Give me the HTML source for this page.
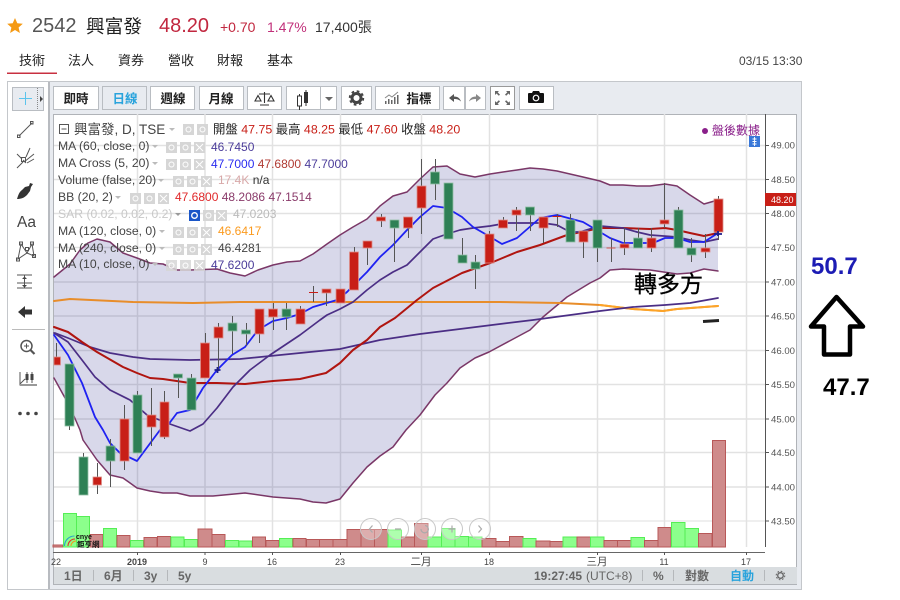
<!DOCTYPE html>
<html><head><meta charset="utf-8"><style>
html,body{margin:0;padding:0;background:#fff;width:900px;height:600px;overflow:hidden}
svg{display:block}
text{font-family:"Liberation Sans","Noto Sans CJK TC",sans-serif}
.b{fill:#fff;stroke:#b9bdc2;stroke-width:1}
.bt{font-size:12.5px;font-weight:700;fill:#222;text-anchor:middle}
.g line{stroke:#e2e2e2;stroke-width:1.5}
.l{font-size:12.2px;fill:#444}
.w{stroke:#555;stroke-width:1}
.r{fill:#c81f17;stroke:#dc8f8a;stroke-width:.8}
.n{fill:#2e8055;stroke:#92bfa6;stroke-width:.8}
.vr{fill:#cf8b8b;stroke:#b85858;stroke-width:1}
.vg{fill:#8cff8c;stroke:#55ee55;stroke-width:1}
.y{font-size:9.6px;fill:#555}
.x{font-size:9px;fill:#444;text-anchor:middle}
.ib{fill:#d6d6d6}
.bb{font-size:12px;font-weight:700;fill:#666}
.ic{fill:none;stroke:#555;stroke-width:1}
.m{fill:none;stroke-linejoin:round;stroke-linecap:round}
</style></head><body>
<svg width="900" height="600" viewBox="0 0 900 600" xmlns="http://www.w3.org/2000/svg">
<polygon points="15,18 17.3,23.3 22.8,23.8 18.6,27.5 19.9,33 15,30 10.1,33 11.4,27.5 7.2,23.8 12.7,23.3" fill="#f59a14"/>
<text x="32" y="32" font-size="20" fill="#555">2542</text>
<text x="86" y="33" font-size="18.7" fill="#222">興富發</text>
<text x="159" y="32" font-size="20" fill="#c1273f">48.20</text>
<text x="220" y="32" font-size="14" fill="#c1273f">+0.70</text>
<text x="267" y="32" font-size="14" fill="#c1307a">1.47%</text>
<text x="315" y="32" font-size="14" fill="#333">17,400張</text>
<g font-size="13" fill="#222"><text x="19" y="65">技術</text><text x="68" y="65">法人</text><text x="118" y="65">資券</text><text x="168" y="65">營收</text><text x="217" y="65">財報</text><text x="267" y="65">基本</text></g>
<rect x="7" y="72.500" width="50" height="1.500" fill="#c83040"/>
<text x="739" y="65" font-size="12" fill="#444">03/15 13:30</text>

<!-- frame -->
<rect x="7.500" y="81.500" width="794" height="508" fill="#fff" stroke="#c4c7cb"/>
<rect x="48" y="82" width="753" height="31" fill="#e8ebf0"/>
<rect x="48" y="82" width="2" height="507" fill="#b8bbc0"/>
<rect x="50" y="113" width="751" height="476" fill="#e8ebf0"/>
<rect x="50" y="585" width="751" height="4" fill="#e8ebf0"/>
<rect x="53" y="114" width="744" height="471" fill="#fff"/>
<rect x="53.500" y="114.500" width="743" height="470" fill="none" stroke="#b0b3b8"/>

<!-- toolbar -->
<rect class="b" x="53.500" y="86.500" width="45" height="23"/><text class="bt" x="76" y="103">即時</text>
<rect x="102.500" y="86.500" width="44" height="23" fill="#e8ebf0" stroke="#b9bdc2"/><text class="bt" x="125" y="103" style="fill:#29a3dc">日線</text>
<rect class="b" x="150.500" y="86.500" width="44" height="23"/><text class="bt" x="173" y="103">週線</text>
<rect class="b" x="199.500" y="86.500" width="44" height="23"/><text class="bt" x="221" y="103">月線</text>
<rect class="b" x="247.500" y="86.500" width="34" height="23"/>
<g fill="none" stroke="#333" stroke-width="1.100"><path d="M264.500 92v11M259 94h11M258 95.500l-3 5.500h6zM271 95.500l-3 5.500h6zM260 105h9"/></g>
<rect class="b" x="286.500" y="86.500" width="50" height="23"/><line x1="320.500" y1="87" x2="320.500" y2="109" stroke="#b9bdc2"/>
<path d="M299.500 94v16M306 90v16" stroke="#333" stroke-width="1"/><rect x="297.500" y="96" width="4" height="10" fill="#fff" stroke="#333"/><rect x="304" y="92" width="4" height="11" fill="#333"/>
<polygon points="325,97 333,97 329,101" fill="#666"/>
<rect class="b" x="341.500" y="86.500" width="30" height="23"/>
<circle cx="356.500" cy="98" r="4.500" fill="none" stroke="#444" stroke-width="3"/><circle cx="356.500" cy="98" r="6.800" fill="none" stroke="#444" stroke-width="1.800" stroke-dasharray="2.700 2.640"/>
<rect class="b" x="375.500" y="86.500" width="64" height="23"/>
<g fill="#666"><rect x="385" y="101" width="1.500" height="3"/><rect x="388" y="99" width="1.500" height="5"/><rect x="391" y="100" width="1.500" height="4"/><rect x="394" y="97" width="1.500" height="7"/><rect x="397" y="95" width="1.500" height="9"/></g><path d="M385 98l4-3 3 2 6-5" fill="none" stroke="#888"/>
<text class="bt" x="419" y="103" style="font-size:12.500px">指標</text>
<rect class="b" x="443.500" y="86.500" width="21" height="23"/><rect class="b" x="465.500" y="86.500" width="20" height="23"/>
<path d="M449 98l5-4v2.500c4 0 6 2 7 5-2-2-4-2.500-7-2.500v3z" fill="#555"/>
<path d="M481 98l-5-4v2.500c-4 0-6 2-7 5 2-2 4-2.500 7-2.500v3z" fill="#888"/>
<rect x="490.500" y="86.500" width="24" height="23" fill="#fff" stroke="#999"/>
<path d="M495 91h4l-1.300 1.300 2.300 2.300-1.200 1.200-2.300-2.300L495 95zM510 91h-4l1.300 1.300-2.300 2.300 1.200 1.200 2.300-2.300L510 95zM495 105h4l-1.300-1.300 2.300-2.300-1.200-1.200-2.300 2.300L495 101zM510 105h-4l1.300-1.300-2.300-2.300 1.200-1.200 2.300 2.300 1.300-1.300z" fill="#666"/>
<rect class="b" x="519.500" y="86.500" width="34" height="23"/>
<path d="M529 93h3l1-2h6l1 2h3a1 1 0 0 1 1 1v8a1 1 0 0 1-1 1h-14a1 1 0 0 1-1-1v-8a1 1 0 0 1 1-1z" fill="#111"/><circle cx="536" cy="98" r="2.800" fill="#111" stroke="#fff" stroke-width="1.200"/>

<!-- left tools -->
<rect x="12.500" y="87.500" width="31" height="23" fill="#e8ebf0" stroke="#b9bdc2"/>
<line x1="37.500" y1="88" x2="37.500" y2="110" stroke="#888" stroke-dasharray="1 1"/>
<path d="M25.500 92v13M19 98.500h13" stroke="#5cc4ec" stroke-width="1"/>
<polygon points="40,96 43,99 40,102" fill="#444"/>
<g class="ic"><path d="M19 136l13-13"/><rect x="17.500" y="135" width="2.500" height="2.500"/><rect x="30.500" y="121.500" width="2.500" height="2.500"/>
<path d="M17 168l6-6M23 160l3 3M24 162l10-8M22 159l-5-5M26 157l4-9M27 163l7-4"/><rect x="21.500" y="157.500" width="4" height="4"/></g>
<path d="M17 199c1-3 2-7 5-9l3-3 4-1 1-3 3 1-2 3-1 4-3 4c-3 3-6 4-10 4z" fill="#333"/>
<text x="17" y="227" font-size="15.500" fill="#444">Aa</text>
<g class="ic"><path d="M18 259l3-15 6 9 5-9 2 12-7-3z"/><rect x="16.500" y="258" width="3" height="3"/><rect x="19.500" y="242" width="3" height="3"/><rect x="25.500" y="247.500" width="3" height="3"/><rect x="30.500" y="242" width="3" height="3"/><rect x="32.500" y="254.500" width="3" height="3"/>
<path d="M17 275h15M17 283h15M17 288h15M24.500 275v13"/></g>
<path d="M22 279l2.500-2.500 2.500 2.500zM22 285l2.500 2.500 2.500-2.500z" fill="#444"/>
<path d="M18 312l7-6v3.500h7v5h-7v3.500z" fill="#333"/>
<line x1="12" y1="329.500" x2="45" y2="329.500" stroke="#bbb"/>
<circle cx="26.500" cy="346" r="5.500" fill="none" stroke="#555" stroke-width="1.500"/><path d="M30.500 350l4 4" stroke="#555" stroke-width="2.200"/><path d="M24 346h5M26.500 343.500v5" stroke="#555"/>
<g class="ic"><path d="M20 372v13h17M20 384l5-5"/></g>
<path d="M20 385h17" stroke="#999" stroke-width="2"/>
<path d="M27 372v11M32 372v11" stroke="#555"/><rect x="25.500" y="374" width="3" height="6" fill="#444"/><rect x="30.500" y="374" width="3" height="6" fill="#444"/>
<circle cx="20" cy="413.500" r="1.800" fill="#444"/><circle cx="28" cy="413.500" r="1.800" fill="#444"/><circle cx="36" cy="413.500" r="1.800" fill="#444"/>

<!-- grid -->
<g class="g">
<line x1="54" x2="765" y1="145.500" y2="145.500"/><line x1="54" x2="765" y1="179.500" y2="179.500"/><line x1="54" x2="765" y1="213.500" y2="213.500"/><line x1="54" x2="765" y1="247.500" y2="247.500"/><line x1="54" x2="765" y1="282" y2="282"/><line x1="54" x2="765" y1="316" y2="316"/><line x1="54" x2="765" y1="350.500" y2="350.500"/><line x1="54" x2="765" y1="384.500" y2="384.500"/><line x1="54" x2="765" y1="419" y2="419"/><line x1="54" x2="765" y1="452.500" y2="452.500"/><line x1="54" x2="765" y1="487" y2="487"/><line x1="54" x2="765" y1="521" y2="521" style="stroke:#efefef;stroke-width:2"/>
<line y1="114" y2="547" x1="137.500" x2="137.500"/><line y1="114" y2="547" x1="205" x2="205"/><line y1="114" y2="547" x1="272.500" x2="272.500"/><line y1="114" y2="547" x1="340.500" x2="340.500"/><line y1="114" y2="547" x1="421.500" x2="421.500"/><line y1="114" y2="547" x1="489.500" x2="489.500"/><line y1="114" y2="547" x1="597.500" x2="597.500"/><line y1="114" y2="547" x1="664.500" x2="664.500"/><line y1="114" y2="547" x1="746.500" x2="746.500"/>
</g>

<!-- BB area -->
<polygon fill="#3c3e96" opacity=".2" points="54,277 70,264 80,250 88,243 97,239 110,242 123,253 137,258 150,263 163,264 177,270 190,270 217,269 230,273 245,276 258,270 273,265 287,262 300,261 313,254 327,244 340,235 353,227 367,219 380,206 393,196 407,192 420,179 433,167 447,166 460,174 475,177 490,174 503,172 517,170 530,168 543,169 557,171 570,174 583,177 600,181 610,185 623,185 637,186 650,186 665,184 677,186 690,195 704,204 718,200 718,271 704,269 690,273 677,274 650,270 623,269 610,270 600,278 590,283 567,297 543,317 530,330 489,352 475,358 460,368 447,383 435,395 420,415 406,430 393,447 380,456 367,467 353,483 340,499 326,503 313,502 300,499 273,497 245,493 213,496 190,496 177,493 163,493 150,491 137,488 123,478 110,475 97,460 83,440 80,430 70,407 54,378"/>
<polyline class="m" stroke="#7a3767" stroke-width="1.500" points="54,277 70,264 80,250 88,243 97,239 110,242 123,253 137,258 150,263 163,264 177,270 190,270 217,269 230,273 245,276 258,270 273,265 287,262 300,261 313,254 327,244 340,235 353,227 367,219 380,206 393,196 407,192 420,179 433,167 447,166 460,174 475,177 490,174 503,172 517,170 530,168 543,169 557,171 570,174 583,177 600,181 610,185 623,185 637,186 650,186 665,184 677,186 690,195 704,204 718,200"/>
<polyline class="m" stroke="#7a3767" stroke-width="1.500" points="54,378 70,407 80,430 83,440 97,460 110,475 123,478 137,488 150,491 163,493 177,493 190,496 213,496 245,493 273,497 300,499 313,502 326,503 340,499 353,483 367,467 380,456 393,447 406,430 420,415 435,395 447,383 460,368 475,358 489,352 530,330 543,317 567,297 590,283 600,278 610,270 623,269 650,270 677,274 690,273 704,269 718,271"/>

<!-- volume -->
<rect class="vr" x="53" y="545" width="10" height="2"/>
<rect class="vg" x="63.500" y="513.500" width="13" height="33.500"/><rect class="vg" x="76.500" y="516.500" width="13" height="30.500"/><rect class="vr" x="90" y="534.500" width="13" height="12.500"/><rect class="vg" x="103.500" y="528.500" width="13" height="18.500"/><rect class="vr" x="117" y="535.500" width="13" height="11.500"/><rect class="vg" x="130.500" y="540.500" width="13" height="6.500"/><rect class="vr" x="144" y="537.500" width="13" height="9.500"/><rect class="vr" x="157.500" y="536.500" width="13" height="10.500"/><rect class="vg" x="171" y="537" width="13" height="10"/><rect class="vg" x="184.500" y="539.500" width="13" height="7.500"/><rect class="vr" x="198" y="529" width="14" height="18"/><rect class="vr" x="212" y="534.500" width="13" height="12.500"/><rect class="vg" x="225.500" y="540.500" width="13" height="6.500"/><rect class="vg" x="239" y="541" width="13" height="6"/><rect class="vr" x="252.500" y="537" width="13" height="10"/><rect class="vr" x="266" y="540.500" width="13" height="6.500"/><rect class="vg" x="279.500" y="538.500" width="13" height="8.500"/><rect class="vr" x="293" y="538.500" width="13" height="8.500"/><rect class="vr" x="306.500" y="539.500" width="13" height="7.500"/><rect class="vr" x="319.500" y="539.500" width="13.500" height="7.500"/><rect class="vr" x="333" y="539.500" width="14" height="7.500"/><rect class="vr" x="347" y="529.500" width="14" height="17.500"/><rect class="vr" x="361" y="529.500" width="13.500" height="17.500"/><rect class="vr" x="374.500" y="529.500" width="13.500" height="17.500"/><rect class="vg" x="388" y="530" width="13.500" height="17"/><rect class="vr" x="401.500" y="537" width="13" height="10"/><rect class="vr" x="414.500" y="523.500" width="13.500" height="23.500"/><rect class="vg" x="428" y="537" width="13.500" height="10"/><rect class="vg" x="441.500" y="528.500" width="13.500" height="18.500"/><rect class="vg" x="455" y="536.500" width="13.500" height="10.500"/><rect class="vg" x="468.500" y="537" width="13.500" height="10"/><rect class="vr" x="482" y="538.500" width="14" height="8.500"/><rect class="vr" x="496" y="541.500" width="13.500" height="5.500"/><rect class="vr" x="509.500" y="536.500" width="13.500" height="10.500"/><rect class="vg" x="523" y="538.500" width="13" height="8.500"/><rect class="vr" x="536" y="541" width="14" height="6"/><rect class="vr" x="550" y="541.500" width="13" height="5.500"/><rect class="vg" x="563" y="537" width="14" height="10"/><rect class="vr" x="577" y="537" width="13.500" height="10"/><rect class="vg" x="590.500" y="537" width="13.500" height="10"/><rect class="vr" x="604" y="540.500" width="13.500" height="6.500"/><rect class="vr" x="617.500" y="540.500" width="13.500" height="6.500"/><rect class="vg" x="631" y="537.500" width="13.500" height="9.500"/><rect class="vr" x="644.500" y="540.500" width="13.500" height="6.500"/><rect class="vr" x="658" y="527.500" width="13" height="19.500"/><rect class="vg" x="671.500" y="522.500" width="13.500" height="24.500"/><rect class="vg" x="685" y="528.500" width="13.500" height="18.500"/><rect class="vr" x="698.500" y="533.500" width="13.500" height="13.500"/><rect class="vr" x="712.500" y="440.500" width="13" height="106.500"/>

<!-- logo -->
<g fill="none" stroke-width="1.100"><path d="M64.500 546a10 10 0 0 1 10-10" stroke="#2aa3c8"/><path d="M68 546a7 7 0 0 1 7-7" stroke="#e0352b"/><path d="M71 546a5 5 0 0 1 5-5" stroke="#f39a1f"/></g>
<text x="76" y="539" font-size="7" font-weight="700" fill="#111">cnye</text>
<text x="77" y="547" font-size="7.500" font-weight="700" fill="#111">鉅亨網</text>

<!-- long MAs under candles -->
<polyline class="m" stroke="#e88d2a" stroke-width="2" points="54,301 70,299 133,302 193,303 240,302 300,302 500,302 560,303 600,305 633,309 663,311 677,309 718,306"/>
<polyline class="m" stroke="#fda428" stroke-width="2" points="600,305 633,309 663,311 677,309 718,306"/>
<polyline class="m" stroke="#4b2e85" stroke-width="1.700" points="55,333 68,338 90,347 110,353 133,357 150,359 190,360 240,359 300,353 340,349 380,340 420,334 460,329 500,324 533,320 600,311 633,307 665,305 690,303 718,298"/>
<polyline class="m" stroke="#b01510" stroke-width="2" points="54,327 68,332 82,342 97,352 123,367 137,373 150,378 163,379 190,383 217,383 245,384 273,381 300,379 326,373 340,363 353,350 367,340 380,327 395,318 417,300 433,288 462,273 493,262 517,252 540,245 567,235 600,228 623,228 650,229 665,228 677,230 690,233 704,236 718,233"/>
<polyline class="m" stroke="#4b2e85" stroke-width="1.700" points="54,333 68,342 82,360 95,377 110,390 130,400 147,415 167,423 190,431 203,424 217,408 233,387 250,370 270,355 300,335 320,320 327,315 340,309 353,302 367,290 380,280 393,272 407,265 420,252 433,239 447,234 460,230 473,228 490,226 507,223 530,223 543,223 557,225 570,232 580,232 600,226 623,228 637,232 650,235 677,237 690,240 704,242 718,239"/>
<polyline class="m" stroke="#1f22f2" stroke-width="1.800" points="54,335 68,355 82,383 95,417 103,430 110,443 120,453 137,461 160,430 168,425 177,413 190,410 203,388 217,370 232,355 245,347 258,330 273,321 287,318 300,314 313,307 337,300 347,292 367,272 380,257 393,245 407,230 420,217 433,206 447,208 462,217 473,227 487,235 502,244 517,238 540,218 557,215 583,222 600,232 610,238 623,243 637,243 653,243 665,238 677,238 690,242 704,242 718,233"/>

<!-- wicks -->
<g class="w">
<path d="M56.500 343v22M69.500 364v66M83.500 453v42M97.500 463v31M110.500 439v48M124.500 405v65M137.500 391v62M151.500 388v58M164.500 391v48M178.500 374v24M191.500 374v36M205.500 333v45M218.500 323v48M232.500 316v38M246.500 323v23M259.500 309v34M273.500 303v27M286.500 303v27M300.500 306v18M313.500 286v16M326.500 289v17M340.500 289v14M354.500 247v43M367.500 241v24M381.500 214v13M394.500 220v42M408.500 217v21M421.500 159v75M435.500 159v41M462.500 238v25M475.500 255v34M489.500 231v32M503.500 217v11M516.500 207v24M530.500 207v24M543.500 217v26M557.500 214v13M570.500 214v28M583.500 231v27M597.500 220v42M611.500 238v24M624.500 228v27M638.500 228v20M651.500 228v24M664.500 183v45M678.500 207v41M691.500 238v24M705.500 234v24M718.500 196v44"/>
</g>
<!-- candles -->
<g>
<rect class="r" x="54" y="357" width="6.500" height="8"/>
<rect class="n" x="65" y="364" width="9" height="62"/><rect class="n" x="79" y="457" width="9" height="38"/><rect class="r" x="93" y="477" width="8.500" height="8"/><rect class="n" x="106" y="446" width="9" height="15"/><rect class="r" x="120" y="419" width="9" height="42"/><rect class="n" x="133" y="395" width="9" height="58"/><rect class="r" x="147" y="415" width="9" height="12"/><rect class="r" x="160" y="402" width="9" height="35"/><rect class="n" x="173.500" y="374" width="9" height="4"/><rect class="n" x="187" y="378" width="9" height="32"/><rect class="r" x="200.500" y="343" width="9" height="35"/><rect class="r" x="214" y="327" width="9" height="11"/><rect class="n" x="228" y="323" width="9" height="8"/><rect class="n" x="241.500" y="330" width="9" height="4"/><rect class="r" x="255" y="309" width="9" height="25"/><rect class="r" x="268.500" y="309" width="9" height="8"/><rect class="n" x="282" y="309" width="9" height="8"/><rect class="r" x="296" y="309" width="9" height="15"/><rect x="309" y="292" width="9" height="1" fill="#c81f17"/><rect class="r" x="322" y="289" width="9" height="4"/><rect class="r" x="336" y="289" width="9" height="14"/><rect class="r" x="349.500" y="252" width="9" height="38"/><rect class="r" x="363" y="241" width="9" height="7"/><rect class="r" x="376.500" y="217" width="9" height="4"/><rect class="n" x="390" y="220" width="9" height="8"/><rect class="r" x="403.500" y="217" width="9" height="11"/><rect class="r" x="417" y="186" width="9" height="22"/><rect class="n" x="430.500" y="172" width="9" height="12"/><rect class="n" x="444" y="183" width="9" height="56"/><rect class="n" x="458" y="255" width="9" height="8"/><rect class="n" x="471" y="262" width="9" height="7"/><rect class="r" x="485" y="234" width="9" height="29"/><rect class="r" x="498.500" y="220" width="9" height="8"/><rect class="r" x="512" y="210" width="9" height="5"/><rect class="n" x="525.500" y="207" width="9" height="8"/><rect class="r" x="539" y="217" width="9" height="11"/><rect x="552.500" y="216" width="9" height="1" fill="#c81f17"/><rect class="n" x="566" y="220" width="9" height="22"/><rect class="r" x="579" y="231" width="9" height="11"/><rect class="n" x="593" y="220" width="9" height="28"/><rect x="606.500" y="247.500" width="9" height="1" fill="#d0554f"/><rect class="r" x="620" y="244" width="9" height="4"/><rect class="n" x="633.500" y="238" width="9" height="10"/><rect class="r" x="647" y="238" width="9" height="10"/><rect class="r" x="660" y="220" width="9" height="4"/><rect class="n" x="674" y="210" width="9" height="38"/><rect class="n" x="687" y="248" width="9" height="7"/><rect class="r" x="701" y="248" width="9" height="4"/><rect class="r" x="714" y="199" width="9" height="33"/>
</g>
<path d="M214.500 370h6M217.500 367v6" stroke="#1a1c8c" stroke-width="1.800"/>
<path d="M714 234h8M718 231v5" stroke="#1a1c8c" stroke-width="1.800"/>

<!-- nav circles -->
<g fill="#fff" fill-opacity=".3" stroke="#c8c8c8" stroke-width="1"><circle cx="371" cy="529" r="10.500"/><circle cx="398" cy="529" r="10.500"/><circle cx="425" cy="529" r="10.500"/><circle cx="452" cy="529" r="10.500"/><circle cx="480" cy="529" r="10.500"/></g>
<g fill="none" stroke="#aaa" stroke-width="1.200"><path d="M372.500 525.500l-3 3.500 3 3.500M395 529h6M421 529a3.700 3.700 0 1 0 4-3.500M448.500 529h7M452 525.500v7M478.500 525.500l3 3.500-3 3.500"/></g>

<!-- axes -->
<line x1="765.500" y1="114" x2="765.500" y2="547" stroke="#555" stroke-width="1"/>
<line x1="53" y1="552.500" x2="765" y2="552.500" stroke="#666" stroke-width="1"/>
<g stroke="#555"><path d="M765 145.500h4M765 179.500h4M765 213.500h4M765 247.500h4M765 282h4M765 316h4M765 350.500h4M765 384.500h4M765 419h4M765 452.500h4M765 487h4M765 521h4"/><path d="M137.500 552v3M205 552v3M272.500 552v3M340.500 552v3M421.500 552v3M489.500 552v3M597.500 552v3M664.500 552v3M746.500 552v3"/></g>
<g class="y"><text x="771" y="148.500">49.00</text><text x="771" y="183">48.50</text><text x="771" y="217">48.00</text><text x="771" y="251">47.50</text><text x="771" y="285.500">47.00</text><text x="771" y="319.500">46.50</text><text x="771" y="354">46.00</text><text x="771" y="388">45.50</text><text x="771" y="422.500">45.00</text><text x="771" y="456">44.50</text><text x="771" y="490.500">44.00</text><text x="771" y="524.500">43.50</text></g>
<rect x="765" y="193" width="31" height="13" fill="#c81f17"/><text x="771" y="203" font-size="9" fill="#fff">48.20</text>
<g class="x"><text x="56" y="565">22</text><text x="137" y="565" font-weight="700">2019</text><text x="205" y="565">9</text><text x="272" y="565">16</text><text x="340" y="565">23</text><text x="421" y="565" style="font-size:10.500px">二月</text><text x="489" y="565">18</text><text x="597" y="565" style="font-size:10.500px">三月</text><text x="664" y="565">11</text><text x="746" y="565">17</text></g>

<!-- bottom bar -->
<rect x="54" y="567" width="743" height="17" fill="#d9dde0"/>
<g class="bb"><text x="64" y="580">1日</text><text x="104" y="580">6月</text><text x="144" y="580">3y</text><text x="178" y="580">5y</text><text x="534" y="580">19:27:45</text><text x="586" y="580" style="font-weight:400">(UTC+8)</text><text x="653" y="580">%</text><text x="685" y="580">對數</text><text x="730" y="580" style="fill:#29a3dc">自動</text></g>
<g stroke="#b5b8bb"><path d="M93.500 570v11M133.500 570v11M167.500 570v11M642.500 570v11M673.500 570v11M764.500 570v11"/></g>
<circle cx="780.500" cy="575.500" r="2.800" fill="none" stroke="#666" stroke-width="1.300"/><circle cx="780.500" cy="575.500" r="4.300" fill="none" stroke="#666" stroke-width="1" stroke-dasharray="1.700 1.680"/>

<!-- legend -->
<rect x="59.500" y="124.500" width="9" height="9" fill="none" stroke="#555"/><path d="M61.500 129h5" stroke="#555"/>
<text x="74" y="134" font-size="13.500" fill="#444">興富發, D, TSE</text>
<polygon points="169,128 175,128 172,131" fill="#bbb"/>
<g class="ib"><rect x="183" y="124" width="11" height="11"/><rect x="197" y="124" width="11" height="11"/></g>
<text x="213" y="133.500" font-size="12.400" fill="#222">開盤 <tspan fill="#c81f17">47.75</tspan> 最高 <tspan fill="#c81f17">48.25</tspan> 最低 <tspan fill="#c81f17">47.60</tspan> 收盤 <tspan fill="#c81f17">48.20</tspan></text>

<text class="l" x="58" y="150">MA (60, close, 0)</text><polygon points="152,145 158,145 155,148" fill="#bbb"/>
<g class="ib"><rect x="166" y="142" width="11" height="11"/><rect x="180" y="142" width="11" height="11"/><rect x="194" y="142" width="11" height="11"/></g>
<text x="211" y="151" font-size="12" fill="#4b3c9a">46.7450</text>

<text class="l" x="58" y="167">MA Cross (5, 20)</text><polygon points="152,162 158,162 155,165" fill="#bbb"/>
<g class="ib"><rect x="166" y="159" width="11" height="11"/><rect x="180" y="159" width="11" height="11"/><rect x="194" y="159" width="11" height="11"/></g>
<text x="211" y="168" font-size="12" fill="#2a2df0">47.7000 <tspan fill="#b03a32">47.6800</tspan> <tspan fill="#4b3c9a">47.7000</tspan></text>

<text class="l" x="58" y="184">Volume (false, 20)</text><polygon points="158,179 164,179 161,182" fill="#bbb"/>
<g class="ib"><rect x="173" y="176" width="11" height="11"/><rect x="187" y="176" width="11" height="11"/><rect x="201" y="176" width="11" height="11"/></g>
<text x="218" y="184" font-size="12" fill="#d8a8a8">17.4K <tspan fill="#333">n/a</tspan></text>

<text class="l" x="58" y="201">BB (20, 2)</text><polygon points="115,196 121,196 118,199" fill="#bbb"/>
<g class="ib"><rect x="130" y="193" width="11" height="11"/><rect x="144" y="193" width="11" height="11"/><rect x="158" y="193" width="11" height="11"/></g>
<text x="175" y="201" font-size="12" fill="#e0282a">47.6800 <tspan fill="#8a3a6a">48.2086</tspan> <tspan fill="#8a3a6a">47.1514</tspan></text>

<text x="58" y="218" font-size="12.200" fill="#c8c8c8">SAR (0.02, 0.02, 0.2)</text><polygon points="175,213 181,213 178,216" fill="#999"/>
<rect x="189" y="210" width="11" height="11" fill="#1a56c8"/><circle cx="194.500" cy="215.500" r="2.800" fill="none" stroke="#fff" stroke-width="1.300"/>
<g class="ib"><rect x="203" y="210" width="11" height="11"/><rect x="216" y="210" width="11" height="11"/></g>
<text x="233" y="218" font-size="12" fill="#bbb">47.0203</text>

<text class="l" x="58" y="235">MA (120, close, 0)</text><polygon points="159,230 165,230 162,233" fill="#bbb"/>
<g class="ib"><rect x="173" y="227" width="11" height="11"/><rect x="187" y="227" width="11" height="11"/><rect x="201" y="227" width="11" height="11"/></g>
<text x="218" y="235" font-size="12" fill="#fb9a1e">46.6417</text>

<text class="l" x="58" y="252">MA (240, close, 0)</text><polygon points="159,247 165,247 162,250" fill="#bbb"/>
<g class="ib"><rect x="173" y="244" width="11" height="11"/><rect x="187" y="244" width="11" height="11"/><rect x="201" y="244" width="11" height="11"/></g>
<text x="218" y="252" font-size="12" fill="#444">46.4281</text>

<text class="l" x="58" y="268">MA (10, close, 0)</text><polygon points="152,263 158,263 155,266" fill="#bbb"/>
<g class="ib" opacity=".85"><rect x="166" y="260" width="11" height="11"/><rect x="180" y="260" width="11" height="11"/><rect x="194" y="260" width="11" height="11"/></g>
<text x="211" y="269" font-size="12" fill="#4b3c9a">47.6200</text>

<!-- legend glyphs -->
<g fill="none" stroke="#fff" stroke-width="1"><circle cx="188.500" cy="129.500" r="2.500"/><circle cx="202.500" cy="129.500" r="2.500"/><circle cx="171.500" cy="147.500" r="2.500"/><circle cx="185.500" cy="147.500" r="2.500"/><path d="M196 144l7 7M203 144l-7 7"/><circle cx="171.500" cy="164.500" r="2.500"/><circle cx="185.500" cy="164.500" r="2.500"/><path d="M196 161l7 7M203 161l-7 7"/><circle cx="178.500" cy="181.500" r="2.500"/><circle cx="192.500" cy="181.500" r="2.500"/><path d="M203 178l7 7M210 178l-7 7"/><circle cx="135.500" cy="198.500" r="2.500"/><circle cx="149.500" cy="198.500" r="2.500"/><path d="M160 195l7 7M167 195l-7 7"/><circle cx="208.500" cy="215.500" r="2.500"/><path d="M218 212l7 7M225 212l-7 7"/><circle cx="178.500" cy="232.500" r="2.500"/><circle cx="192.500" cy="232.500" r="2.500"/><path d="M203 229l7 7M210 229l-7 7"/><circle cx="178.500" cy="249.500" r="2.500"/><circle cx="192.500" cy="249.500" r="2.500"/><path d="M203 246l7 7M210 246l-7 7"/><circle cx="171.500" cy="265.500" r="2.500"/><circle cx="185.500" cy="265.500" r="2.500"/><path d="M196 262l7 7M203 262l-7 7"/></g>

<!-- after-hours -->
<circle cx="705" cy="131" r="3" fill="#8a1f8a"/>
<text x="712" y="134.500" font-size="12" fill="#8a1f8a">盤後數據</text>
<rect x="749" y="136" width="11" height="11" fill="#3a78d8"/><path d="M754.500 137v9M752.500 139h4M752.500 141.500h4M752.500 144h4" stroke="#fff" stroke-width=".9"/>

<!-- annotations -->
<text x="634" y="292" font-size="23" fill="#000" stroke="#000" stroke-width=".35">轉多方</text>
<path d="M703 321.500l16-1" stroke="#222" stroke-width="3"/>
<text x="811" y="274" font-size="24" font-weight="700" fill="#1c1cb4">50.7</text>
<polygon points="836.500,297 811,326.500 824,326.500 824,354.500 850,354.500 850,326.500 863,326.500" fill="#fff" stroke="#000" stroke-width="4.500" stroke-linejoin="round"/>
<text x="823" y="395" font-size="24" font-weight="700" fill="#000">47.7</text>
</svg>
</body></html>
